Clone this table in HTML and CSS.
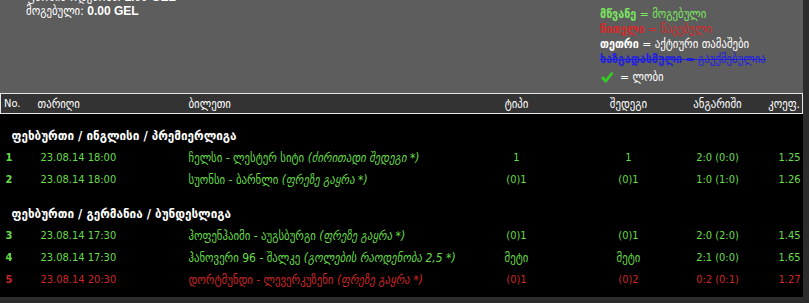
FILE: index.html
```html
<!DOCTYPE html>
<html lang="ka">
<head>
<meta charset="utf-8">
<title>ბილეთები</title>
<link rel="stylesheet" href="styles.css">
</head>
<body>
<div class="frame">
  <div class="page">
    <div class="top">
      <div class="info">
        <div class="info-line">ფსონის ოდენობა: <b>1.00 GEL</b></div>
        <div class="info-line">მოგებული: <b>0.00 GEL</b></div>
      </div>
      <div class="legend">
        <div class="lg green"><b>მწვანე</b> = მოგებული</div>
        <div class="lg red"><b>წითელი</b> = წაგებული</div>
        <div class="lg white"><b>თეთრი</b> = აქტიური თამაშები</div>
        <div class="lg blue"><b>ხაზგადასმული</b> = გაუქმებულია</div>
        <div class="lg white check-line">
          <svg class="check" width="14" height="13" viewBox="0 0 14 13"><path d="M1 7.2 L3.6 5 L5.6 8 L11.6 0.8 L13.4 2.4 L5.8 12.2 Z" fill="#33cc22"/></svg>
          <span>= ლობი</span>
        </div>
      </div>
    </div>
    <div class="board">
      <table class="tickets">
        <colgroup>
          <col class="c-no"><col class="c-date"><col class="c-ticket"><col class="c-type"><col class="c-res"><col class="c-score"><col class="c-coef">
        </colgroup>
        <thead>
          <tr class="head">
            <th class="left no">No.</th>
            <th class="left">თარიღი</th>
            <th class="left">ბილეთი</th>
            <th>ტიპი</th>
            <th>შედეგი</th>
            <th>ანგარიში</th>
            <th class="right">კოეფ.</th>
          </tr>
        </thead>
        <tbody>
          <tr class="section first"><td colspan="7">ფეხბურთი / ინგლისი / პრემიერლიგა</td></tr>
          <tr class="row won">
            <td class="num">1</td><td class="date">23.08.14 18:00</td>
            <td class="ticket">ჩელსი - ლესტერ სიტი <i>(ძირითადი შედეგი *)</i></td>
            <td class="val">1</td><td class="val">1</td><td class="val">2:0 (0:0)</td><td class="val right">1.25</td>
          </tr>
          <tr class="row won">
            <td class="num">2</td><td class="date">23.08.14 18:00</td>
            <td class="ticket">სუონსი - ბარნლი <i>(ფრეზე გაყრა *)</i></td>
            <td class="val">(0)1</td><td class="val">(0)1</td><td class="val">1:0 (1:0)</td><td class="val right">1.26</td>
          </tr>
          <tr class="section"><td colspan="7">ფეხბურთი / გერმანია / ბუნდესლიგა</td></tr>
          <tr class="row won">
            <td class="num">3</td><td class="date">23.08.14 17:30</td>
            <td class="ticket">ჰოფენჰაიმი - აუგსბურგი <i>(ფრეზე გაყრა *)</i></td>
            <td class="val">(0)1</td><td class="val">(0)1</td><td class="val">2:0 (2:0)</td><td class="val right">1.45</td>
          </tr>
          <tr class="row won">
            <td class="num">4</td><td class="date">23.08.14 17:30</td>
            <td class="ticket">ჰანოვერი 96 - შალკე <i>(გოლების რაოდენობა 2,5 *)</i></td>
            <td class="word">მეტი</td><td class="word">მეტი</td><td class="val">2:1 (0:0)</td><td class="val right">1.65</td>
          </tr>
          <tr class="row lost">
            <td class="num">5</td><td class="date">23.08.14 20:30</td>
            <td class="ticket">დორტმუნდი - ლევერკუზენი <i>(ფრეზე გაყრა *)</i></td>
            <td class="val">(0)1</td><td class="val">(0)2</td><td class="val">0:2 (0:1)</td><td class="val right">1.27</td>
          </tr>
        </tbody>
      </table>
    </div>
  </div>
</div>
</body>
</html>
```

FILE: styles.css
```css
html, body {
  margin: 0;
  padding: 0;
}
body {
  background: #2c2c2c;
  font-family: "Liberation Sans Narrow", "DejaVu Sans Condensed", "DejaVu Sans", sans-serif;
  font-size: 12px;
  width: 809px;
  height: 303px;
  overflow: hidden;
}
.frame {
  width: 803px;
  height: 297px;
  overflow: hidden;
  background: #000;
}
.page {
  display: flex;
  flex-direction: column;
}
.top {
  background: #5d5d5d;
  height: 93px;
  display: flex;
  overflow: hidden;
}
.info {
  width: 574px;
  padding-left: 26px;
  margin-top: -10px;
  color: #fff;
}
.info-line {
  line-height: 14px;
  font-size: 12px;
}
.info-line b {
  font-family: "Liberation Sans", "DejaVu Sans", sans-serif;
  font-size: 12px;
}
.legend {
  padding-top: 7px;
  display: flex;
  flex-direction: column;
}
.lg {
  line-height: 15px;
  white-space: nowrap;
}
.lg b { font-weight: bold; }
.green { color: #7be660; }
.red { color: #d42a2a; }
.white { color: #fff; }
.blue { color: #1f1fe0; text-decoration: line-through; }
.check-line {
  display: flex;
  align-items: center;
  gap: 6px;
  margin-top: 3px;
}
.check { display: block; }
.board {
  background: #000;
  flex: 1;
}
.tickets {
  width: 802px;
  border-collapse: collapse;
  table-layout: fixed;
}
.c-no { width: 37px; }
.c-date { width: 151px; }
.c-ticket { width: 278px; }
.c-type { width: 100px; }
.c-res { width: 124px; }
.c-score { width: 54px; }
.c-coef { width: 58px; }
.head {
  background: #333;
  color: #fff;
  border: 1px solid #e6e6e6;
  height: 20px;
}
.head th {
  font-weight: normal;
  font-size: 12px;
  padding: 0;
  text-align: center;
  white-space: nowrap;
}
.head th.left { text-align: left; }
.head th.no { padding-left: 3px; font-size: 11px; }
.head th.right { text-align: right; padding-right: 2px; }
.section td {
  color: #fff;
  font-weight: bold;
  font-size: 13px;
  height: 31px;
  vertical-align: bottom;
  padding: 0 0 3px 11px;
  line-height: 16px;
  white-space: nowrap;
}
.section.first td { height: 30px; }
.row td {
  height: 22px;
  padding: 0;
  text-align: center;
  white-space: nowrap;
  line-height: 22px;
}
.row td.val, .row td.date, .row td.num { font-size: 11px; }
.row td.num { text-align: left; padding-left: 5px; font-weight: bold; }
.row td.date { text-align: left; padding-left: 3px; }
.row td.ticket { text-align: left; }
.row td.right { text-align: right; padding-right: 2px; }
.won td { color: #66dd48; }
.lost td { color: #cc2626; }
```
